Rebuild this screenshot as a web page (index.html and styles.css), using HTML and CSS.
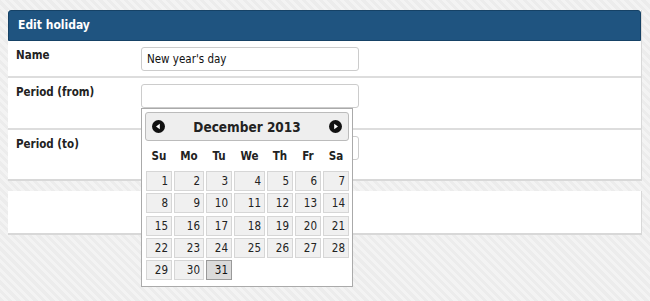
FILE: index.html
```html
<!DOCTYPE html>
<html lang="en">
<head>
    <meta charset="UTF-8">
    <title>Edit holiday</title>
    <link rel="stylesheet" href="styles.css">
</head>
<body>
    <div class="panel">
        <div class="panel-header">Edit holiday</div>
        <div class="form-row">
            <label class="form-label" for="name">Name</label>
            <div><input type="text" id="name" value="New year's day"></div>
        </div>
        <div class="form-row tall">
            <label class="form-label" for="from">Period (from)</label>
            <div><input type="text" id="from"></div>
        </div>
        <div class="form-row tall last">
            <label class="form-label" for="to">Period (to)</label>
            <div><input type="text" id="to"></div>
        </div>
    </div>

    <div class="panel actions"></div>

    <!-- datepicker popup, opened under "Period (from)" -->
    <div class="datepicker">
        <div class="dp-header">
            <span class="dp-nav">
                <svg width="13" height="13" viewBox="0 0 13 13"><circle cx="6.5" cy="6.5" r="6.5" fill="#111"/><path d="M4 6.5 L7.8 3.8 L7.8 9.2 Z" fill="#fff"/></svg>
            </span>
            <span class="dp-title">December 2013</span>
            <span class="dp-nav">
                <svg width="13" height="13" viewBox="0 0 13 13"><circle cx="6.5" cy="6.5" r="6.5" fill="#111"/><path d="M9 6.5 L5.2 3.8 L5.2 9.2 Z" fill="#fff"/></svg>
            </span>
        </div>
        <div class="dp-grid dp-weekdays">
            <span>Su</span><span>Mo</span><span>Tu</span><span>We</span><span>Th</span><span>Fr</span><span>Sa</span>
        </div>
        <div class="dp-grid dp-days">
            <a>1</a><a>2</a><a>3</a><a>4</a><a>5</a><a>6</a><a>7</a>
            <a>8</a><a>9</a><a>10</a><a>11</a><a>12</a><a>13</a><a>14</a>
            <a>15</a><a>16</a><a>17</a><a>18</a><a>19</a><a>20</a><a>21</a>
            <a>22</a><a>23</a><a>24</a><a>25</a><a>26</a><a>27</a><a>28</a>
            <a>29</a><a>30</a><a class="active">31</a>
        </div>
    </div>
</body>
</html>
```

FILE: styles.css
```css
* {
    margin: 0;
    padding: 0;
    box-sizing: border-box;
}

body {
    font-family: "DejaVu Sans Condensed", "DejaVu Sans", sans-serif;
    font-size: 11px;
    color: #222;
    background: repeating-linear-gradient(45deg, #ececec 0, #ececec 3px, #f3f3f3 3px, #f3f3f3 6px);
    padding: 10px 8px 0;
    min-height: 301px;
    position: relative;
}

.panel {
    width: 634px;
    background: #fff;
    border-right: 1px solid #d8d8d8;
    border-bottom: 2px solid #d8d8d8;
}

.panel-header {
    height: 31px;
    background: #1f5480;
    border: 1px solid #164266;
    border-radius: 3px 3px 0 0;
    color: #fff;
    font-weight: bold;
    font-size: 12px;
    line-height: 29px;
    padding-left: 9px;
}

.form-row {
    display: grid;
    grid-template-columns: 133px 218px;
    height: 37px;
    padding-top: 6px;
    border-bottom: 2px solid #dddddd;
}

.form-row.tall {
    height: 52px;
}

.form-row.last {
    height: 49px;
    border-bottom: none;
}

.form-label {
    font-weight: bold;
    font-size: 11.5px;
    padding-left: 8px;
    line-height: 16px;
}

input {
    width: 218px;
    height: 24px;
    border: 1px solid #cccccc;
    border-radius: 3px;
    padding: 0 5px;
    font-family: inherit;
    font-size: 11.5px;
    color: #111;
    outline: none;
}

.actions {
    margin-top: 10px;
    height: 44px;
}

.datepicker {
    position: absolute;
    left: 141px;
    top: 108px;
    width: 212px;
    height: 179px;
    background: #fff;
    border: 1px solid #aaaaaa;
    padding: 3px 3px 0;
}

.dp-header {
    display: flex;
    align-items: center;
    justify-content: space-between;
    height: 29px;
    background: #eeeeee;
    border: 1px solid #bbbbbb;
    border-radius: 3px;
    padding: 0 6px 0 6px;
}

.dp-nav {
    display: flex;
}

.dp-title {
    font-weight: bold;
    font-size: 13.5px;
    color: #222;
}

.dp-grid {
    display: grid;
    grid-template-columns: 26px 30px 26px 31px 26px 26px 26px;
    column-gap: 2px;
    padding-left: 1px;
}

.dp-weekdays {
    padding-top: 7px;
    height: 30px;
    line-height: 16px;
    font-weight: bold;
    font-size: 11.5px;
    text-align: center;
}

.dp-days {
    row-gap: 2.3px;
}

.dp-days a {
    display: block;
    height: 20px;
    line-height: 18px;
    text-align: right;
    padding-right: 3px;
    background: #f0f0f0;
    border: 1px solid #d6d6d6;
    font-size: 11.5px;
    color: #222;
}

.dp-days a.active {
    background: #dadada;
    border-color: #999999;
    color: #111;
}
```
